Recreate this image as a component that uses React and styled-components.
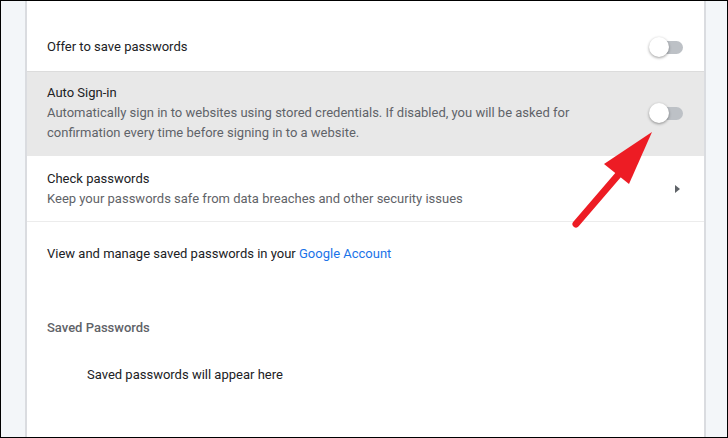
import React from 'react'
import styled, { createGlobalStyle } from 'styled-components'

const Global = createGlobalStyle`
  html, body { margin: 0; padding: 0; background: #f3f6f9; }
  body { font-family: Roboto, "Liberation Sans", Arial, sans-serif; font-size: 13px; }
  * { box-sizing: border-box; }
`

const Frame = styled.div`
  position: relative;
  width: 728px;
  height: 438px;
  border: 1px solid #000;
  background: #f3f6f9;
  display: flex;
  justify-content: flex-start;
  overflow: hidden;
`

const Card = styled.div`
  margin-left: 24px;
  width: 681px;
  background: #fff;
  border-left: 2px solid #dadce0;
  border-right: 2px solid #dadce0;
  padding-top: 22px;
  display: flex;
  flex-direction: column;
`

const Row = styled.div`
  display: flex;
  align-items: center;
  padding: ${p => p.pad || '0 20px'};
  min-height: ${p => p.h || 48}px;
  background: ${p => (p.hover ? '#e8e8e8' : '#fff')};
  border-bottom: ${p => (p.line ? `1px solid ${p.line}` : 'none')};
`

const Body = styled.div`
  flex: 1;
  line-height: 20px;
`

const Title = styled.div`
  color: #202124;
`

const Desc = styled.div`
  color: #5f6368;
`

const Link = styled.a`
  color: #1a73e8;
  text-decoration: none;
`

const Heading = styled.div`
  color: #5f6368;
  font-weight: 500;
  padding: 0 20px;
  line-height: 20px;
  margin-top: ${p => p.top}px;
`

const Empty = styled.div`
  color: #202124;
  padding: 0 60px;
  line-height: 20px;
  margin-top: ${p => p.top}px;
`

const Track = styled.div`
  position: relative;
  width: 32px;
  height: 13px;
  border-radius: 7px;
  background: #bdc1c6;
  margin-right: 1px;
`

const Knob = styled.div`
  position: absolute;
  left: -2px;
  top: -4px;
  width: 20px;
  height: 20px;
  border-radius: 50%;
  background: #fff;
  box-shadow: 0 1px 3px rgba(0, 0, 0, 0.4);
`

const Toggle = () => (
  <Track>
    <Knob />
  </Track>
)

const Caret = styled.div`
  width: 0;
  height: 0;
  border-top: 4.5px solid transparent;
  border-bottom: 4.5px solid transparent;
  border-left: 5px solid #5f6368;
  margin-right: 4px;
`

const Annotation = styled.svg`
  position: absolute;
  left: 0;
  top: 0;
  pointer-events: none;
`

export default function App() {
  return (
    <>
      <Global />
      <Frame>
        <Card>
          <Row h={49} line="#dcdcdc">
            <Body><Title>Offer to save passwords</Title></Body>
            <Toggle />
          </Row>
          <Row hover pad="11px 20px 13px" h={84}>
            <Body>
              <Title>Auto Sign-in</Title>
              <Desc>
                Automatically sign in to websites using stored credentials. If disabled, you will be asked for
                <br />
                confirmation every time before signing in to a website.
              </Desc>
            </Body>
            <Toggle />
          </Row>
          <Row pad="13px 20px 12px" h={66} line="#ececec">
            <Body>
              <Title>Check passwords</Title>
              <Desc>Keep your passwords safe from data breaches and other security issues</Desc>
            </Body>
            <Caret />
          </Row>
          <Row h={64}>
            <Body>
              <Title>
                View and manage saved passwords in your <Link>Google Account</Link>
              </Title>
            </Body>
          </Row>
          <Heading top={32}>Saved Passwords</Heading>
          <Empty top={27}>Saved passwords will appear here</Empty>
          <Heading top={49}>Never saved</Heading>
        </Card>
        <Annotation width="728" height="438">
          <line x1="575" y1="223" x2="618" y2="173" stroke="#ed1c24" strokeWidth="7" strokeLinecap="round" />
          <polygon points="651,131 603,163 628,183" fill="#ed1c24" />
        </Annotation>
      </Frame>
    </>
  )
}
